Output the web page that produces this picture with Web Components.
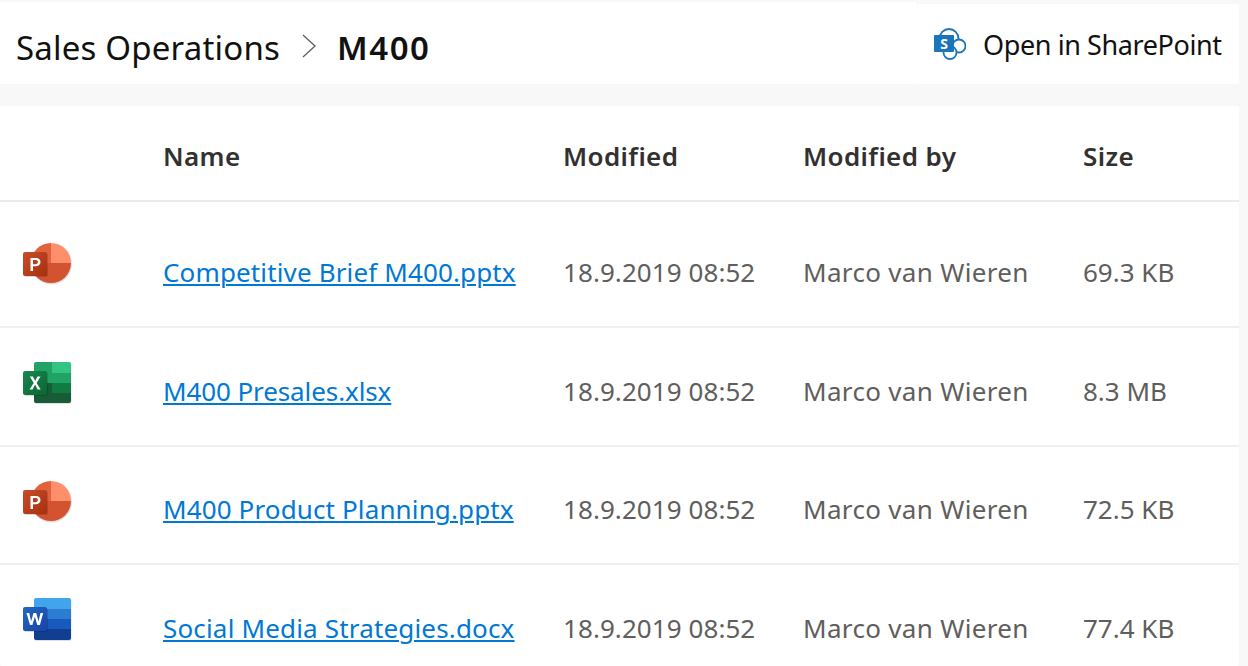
<!DOCTYPE html>
<html>
<head>
<meta charset="utf-8">
<style>
  html, body { margin: 0; padding: 0; height: 666px; overflow: hidden; background: #f8f8f8; font-family: "Noto Sans", "Open Sans", sans-serif; }
</style>
</head>
<body>
<page-header>
  <bread-crumb slot="crumb" parent="Sales Operations" current="M400"></bread-crumb>
</page-header>
<file-table>
  <file-row type="ppt" name="Competitive Brief M400.pptx" modified="18.9.2019 08:52" by="Marco van Wieren" size="69.3 KB" style="height:126px;padding-top:16px;--icon-top:24px;--link-ls:.14px"></file-row>
  <file-row type="xls" name="M400 Presales.xlsx" modified="18.9.2019 08:52" by="Marco van Wieren" size="8.3 MB" style="height:119px;--icon-top:26px;--link-ls:-.1px"></file-row>
  <file-row type="ppt" name="M400 Product Planning.pptx" modified="18.9.2019 08:52" by="Marco van Wieren" size="72.5 KB" style="--link-ls:.13px"></file-row>
  <file-row type="doc" name="Social Media Strategies.docx" modified="18.9.2019 08:52" by="Marco van Wieren" size="77.4 KB" last></file-row>
</file-table>
<script>
const grad = (id, from, to) => `<defs><linearGradient id="${id}" x1="0" y1="0" x2="1" y2="1"><stop offset="0" stop-color="${from}"/><stop offset="1" stop-color="${to}"/></linearGradient></defs>`

const icons = {
  ppt: `<svg width="50" height="46" viewBox="0 0 50 46">
    ${grad('p', '#ca4c28', '#a5300f')}
    <circle cx="28.500" cy="22" r="20.500" fill="#000" opacity=".12"/>
    <path d="M28 1a20 20 0 0 0-20 20h20z" fill="#e0633e"/>
    <path d="M28 1a20 20 0 0 1 20 20H28z" fill="#ff8f6b"/>
    <path d="M8 21a20 20 0 0 0 40 0z" fill="#d35230"/>
    <rect x="1" y="11" width="24" height="24" rx="2" fill="#000" opacity=".15"/>
    <rect x="0" y="10" width="24" height="24" rx="2" fill="url(#p)"/>
    <path d="M7.500 29V16h5.200c3 0 4.800 1.600 4.800 4.100s-1.900 4.200-4.800 4.200H10V29zM10 22.200h2.300c1.700 0 2.600-.7 2.600-2.100s-.9-2-2.600-2H10z" fill="#fff"/>
  </svg>`,
  xls: `<svg width="50" height="46" viewBox="0 0 50 46">
    ${grad('x', '#18884f', '#0b6631')}
    <rect x="11.500" y="1" width="37" height="41" rx="2" fill="#000" opacity=".12"/>
    <path d="M11 2a2 2 0 0 1 2-2h16v21H11z" fill="#21a366"/>
    <path d="M29 0h17a2 2 0 0 1 2 2v9H29z" fill="#33c481"/>
    <rect x="29" y="11" width="19" height="10" fill="#21a366"/>
    <path d="M11 21h18v20H13a2 2 0 0 1-2-2z" fill="#185c37"/>
    <rect x="29" y="21" width="19" height="10" fill="#107c41"/>
    <path d="M29 31h19v8a2 2 0 0 1-2 2H29z" fill="#185c37"/>
    <rect x="1" y="10" width="24" height="24" rx="2" fill="#000" opacity=".15"/>
    <rect x="0" y="9" width="24" height="24" rx="2" fill="url(#x)"/>
    <path d="M6.500 27.500l4.200-6.500-3.900-6.500h3.100l2.200 4.600 2.400-4.600h3l-3.900 6.500 4.100 6.500h-3.100l-2.500-4.900-2.500 4.900z" fill="#fff"/>
  </svg>`,
  doc: `<svg width="50" height="46" viewBox="0 0 50 46">
    ${grad('w', '#2368c4', '#1a43a4')}
    <rect x="11.500" y="1" width="37" height="42" rx="2" fill="#000" opacity=".12"/>
    <path d="M11 2a2 2 0 0 1 2-2h33a2 2 0 0 1 2 2v9H11z" fill="#41a5ee"/>
    <rect x="11" y="11" width="37" height="10" fill="#2b7cd3"/>
    <rect x="11" y="21" width="37" height="10" fill="#185abd"/>
    <path d="M11 31h37v9a2 2 0 0 1-2 2H13a2 2 0 0 1-2-2z" fill="#103f91"/>
    <rect x="1" y="10" width="24" height="24" rx="2" fill="#000" opacity=".15"/>
    <rect x="0" y="9" width="24" height="24" rx="2" fill="url(#w)"/>
    <path d="M3.500 15h2.700l1.900 8.200L10.500 15h2.700l2.300 8.200L17.500 15h2.700l-3.300 12h-2.600l-2.500-8.300-2.400 8.300H7z" fill="#fff"/>
  </svg>`
}

class BreadCrumb extends HTMLElement {
  constructor() {
    super()
    this.attachShadow({ mode: 'open' })
    this.shadowRoot.innerHTML = `
      <style>
        :host { display: flex; align-items: center; font-size: 33px; color: #111; letter-spacing: .2px; }
        svg { margin: -2px 20px 0 21px; }
        b { font-weight: 600; letter-spacing: 1.500px; }
      </style>
      <span>${this.getAttribute('parent')}</span>
      <svg width="16" height="24" viewBox="0 0 16 24"><path d="M2 1l12 11L2 23" fill="none" stroke="#605e5c" stroke-width="1.300"/></svg>
      <b>${this.getAttribute('current')}</b>`
  }
}

class PageHeader extends HTMLElement {
  constructor() {
    super()
    this.attachShadow({ mode: 'open' })
    this.shadowRoot.innerHTML = `
      <style>
        :host { display: flex; height: 84px; box-sizing: border-box; padding: 2px 9px 0 0; }
        .left { width: 916px; background: #fff; display: flex; align-items: center; padding: 8px 0 0 16px; box-sizing: border-box; }
        .right { flex: 1; margin-top: 2px; background: #fff; border-radius: 4px; display: flex; align-items: center; padding-left: 18px; font-size: 27px; color: #111; letter-spacing: -.4px; }
        svg { margin: 0 17px 1px 0; }
        span { padding-top: 1px; }
      </style>
      <div class="left"><slot name="crumb"></slot></div>
      <div class="right">
        <svg width="32" height="32" viewBox="0 0 32 32">
          <g fill="#fff" stroke="#1b75bb" stroke-width="1.800">
            <circle cx="15" cy="10.500" r="9.500"/>
            <circle cx="25" cy="18" r="6.500"/>
            <circle cx="16" cy="24.500" r="6.500"/>
          </g>
          <rect x="0" y="7" width="20" height="17" rx="1" fill="#1b75bb"/>
          <text x="10" y="20.500" text-anchor="middle" font-family="Noto Sans, sans-serif" font-weight="700" font-size="14" fill="#fff">S</text>
        </svg>
        <span>Open in SharePoint</span>
      </div>`
  }
}

class FileTable extends HTMLElement {
  constructor() {
    super()
    this.attachShadow({ mode: 'open' })
    this.shadowRoot.innerHTML = `
      <style>
        :host { display: block; margin: 22px 9px 0 0; background: #fff; border-radius: 2px; height: 560px; overflow: hidden; }
        .head { display: grid; grid-template-columns: 163px 400px 240px 280px 1fr; height: 96px; box-sizing: border-box; padding-top: 6px; align-items: center; border-bottom: 2px solid #edebe9; font-size: 26px; font-weight: 600; color: #323130; letter-spacing: .38px; }
        .head span:first-child { grid-column: 2; }
      </style>
      <div class="head"><span>Name</span><span>Modified</span><span>Modified by</span><span>Size</span></div>
      <slot></slot>`
  }
}

class FileRow extends HTMLElement {
  constructor() {
    super()
    this.attachShadow({ mode: 'open' })
    const a = n => this.getAttribute(n)
    this.shadowRoot.innerHTML = `
      <style>
        :host { display: grid; grid-template-columns: 163px 400px 240px 280px 1fr; height: 118px; box-sizing: border-box; padding-top: 8px; border-bottom: 2px solid #f1f0ef; font-size: 26px; color: #605e5c; align-items: center; }
        :host([last]) { border-bottom: 0; }
        .icon { padding-left: 23px; height: 46px; align-self: start; margin-top: var(--icon-top, 25px); }
        a { color: #0078d4; text-decoration: underline; text-underline-offset: 2px; text-decoration-thickness: 2px; white-space: nowrap; letter-spacing: var(--link-ls, .17px); }
        span { white-space: nowrap; }
        .date { letter-spacing: .07px; }
        .by { letter-spacing: .33px; }
      </style>
      <div class="icon">${icons[a('type')]}</div>
      <span><a href="#">${a('name')}</a></span>
      <span class="date">${a('modified')}</span>
      <span class="by">${a('by')}</span>
      <span>${a('size')}</span>`
  }
}

customElements.define('bread-crumb', BreadCrumb)
customElements.define('page-header', PageHeader)
customElements.define('file-table', FileTable)
customElements.define('file-row', FileRow)
</script>
</body>
</html>
